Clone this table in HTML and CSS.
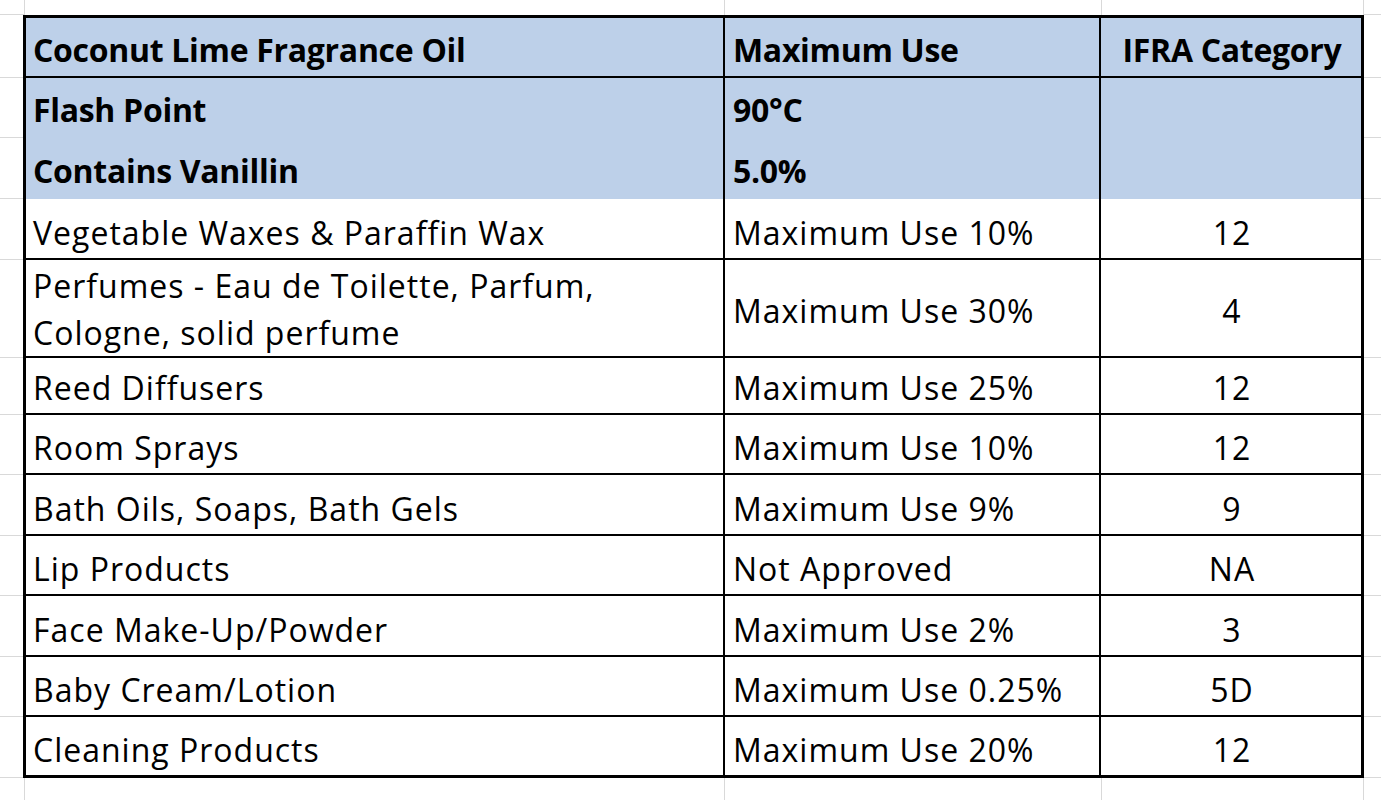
FILE: index.html
```html
<!DOCTYPE html>
<html lang="en">
<head>
<meta charset="utf-8">
<title>Coconut Lime Fragrance Oil</title>
<link rel="stylesheet" href="styles.css">
</head>
<body>
<div class="sheet">
  <div class="strip strip-top">
    <div class="g gl"></div><div class="g"></div><div class="g"></div><div class="g"></div><div class="g gr"></div>
  </div>

  <div class="row head h-63">
    <div class="gut"></div>
    <div class="c a b">Coconut Lime Fragrance Oil</div>
    <div class="c m b">Maximum Use</div>
    <div class="c z b">IFRA Category</div>
    <div class="gut"></div>
  </div>

  <div class="row blue h-60">
    <div class="gut"></div>
    <div class="c a b">Flash Point</div>
    <div class="c m b">90°C</div>
    <div class="c z"></div>
    <div class="gut"></div>
  </div>

  <div class="row blue h-61">
    <div class="gut"></div>
    <div class="c a b">Contains Vanillin</div>
    <div class="c m b">5.0%</div>
    <div class="c z"></div>
    <div class="gut"></div>
  </div>

  <div class="row h-61">
    <div class="gut"></div>
    <div class="c a">Vegetable Waxes &amp; Paraffin Wax</div>
    <div class="c m">Maximum Use 10%</div>
    <div class="c z">12</div>
    <div class="gut"></div>
  </div>

  <div class="row tall h-94">
    <div class="gut"></div>
    <div class="c a">Perfumes - Eau de Toilette, Parfum,<br>Cologne, solid perfume</div>
    <div class="c m">Maximum Use 30%</div>
    <div class="c z">4</div>
    <div class="gut"></div>
  </div>

  <div class="row h-61">
    <div class="gut"></div>
    <div class="c a">Reed Diffusers</div>
    <div class="c m">Maximum Use 25%</div>
    <div class="c z">12</div>
    <div class="gut"></div>
  </div>

  <div class="row h-60">
    <div class="gut"></div>
    <div class="c a">Room Sprays</div>
    <div class="c m">Maximum Use 10%</div>
    <div class="c z">12</div>
    <div class="gut"></div>
  </div>

  <div class="row h-61">
    <div class="gut"></div>
    <div class="c a">Bath Oils, Soaps, Bath Gels</div>
    <div class="c m">Maximum Use 9%</div>
    <div class="c z">9</div>
    <div class="gut"></div>
  </div>

  <div class="row h-60">
    <div class="gut"></div>
    <div class="c a">Lip Products</div>
    <div class="c m">Not Approved</div>
    <div class="c z">NA</div>
    <div class="gut"></div>
  </div>

  <div class="row h-61">
    <div class="gut"></div>
    <div class="c a">Face Make-Up/Powder</div>
    <div class="c m">Maximum Use 2%</div>
    <div class="c z">3</div>
    <div class="gut"></div>
  </div>

  <div class="row h-60">
    <div class="gut"></div>
    <div class="c a">Baby Cream/Lotion</div>
    <div class="c m">Maximum Use 0.25%</div>
    <div class="c z">5D</div>
    <div class="gut"></div>
  </div>

  <div class="row last h-61">
    <div class="gut"></div>
    <div class="c a">Cleaning Products</div>
    <div class="c m">Maximum Use 20%</div>
    <div class="c z">12</div>
    <div class="gut"></div>
  </div>

  <div class="strip strip-bottom">
    <div class="g"></div><div class="g"></div><div class="g"></div><div class="g"></div><div class="g"></div>
  </div>
</div>
</body>
</html>
```

FILE: styles.css
```css
* { box-sizing: border-box; }

html, body {
  margin: 0;
  padding: 0;
  background: #ffffff;
}

body {
  width: 1381px;
  height: 800px;
  overflow: hidden;
  font-family: "Open Sans", "Noto Sans", sans-serif;
  color: #000;
}

.sheet {
  display: flex;
  flex-direction: column;
  height: 800px;
}

/* gutter strips above and below the table */
.strip {
  display: grid;
  grid-template-columns: 25px 700px 377px 262px 1fr;
}
.strip-top { height: 15px; }
.strip-bottom { flex: 1; }
.strip .g { border-right: 1px solid #d9d9d9; }
.strip .g:last-child { border-right: 0; }
.strip-top .gl,
.strip-top .gr { border-bottom: 1px solid #d9d9d9; }

/* table rows */
.row {
  display: grid;
  grid-template-columns: 23px 702px 376px 263px 1fr;
}
.h-60 { height: 60px; }
.h-61 { height: 61px; }
.h-63 { height: 63px; }
.h-94 { height: 94px; }

.gut { border-bottom: 1px solid #d9d9d9; }

.c {
  display: flex;
  align-items: flex-end;
  font-size: 32px;
  line-height: 47px;
  letter-spacing: 1px;
  white-space: nowrap;
  padding-bottom: 2px;
  border-bottom: 2px solid #000;
}
.c.a {
  border-left: 3px solid #000;
  border-right: 2px solid #000;
  padding-left: 7px;
}
.c.m {
  border-right: 2px solid #000;
  padding-left: 8px;
}
.c.z {
  border-right: 3px solid #000;
  justify-content: center;
  padding-left: 2px;
}

.c.b {
  font-weight: 700;
  letter-spacing: -0.3px;
}

.head .c {
  background: #bdd0e9;
  border-top: 3px solid #000;
  padding-bottom: 3px;
}
.blue .c {
  background: #bdd0e9;
  border-bottom: 0;
  padding-bottom: 5px;
}
.tall .c.a {
  align-items: flex-start;
  padding-top: 2px;
  padding-bottom: 0;
}
.tall .c.m,
.tall .c.z {
  align-items: center;
  padding-top: 6px;
}
.last .c { border-bottom-width: 3px; }
```
